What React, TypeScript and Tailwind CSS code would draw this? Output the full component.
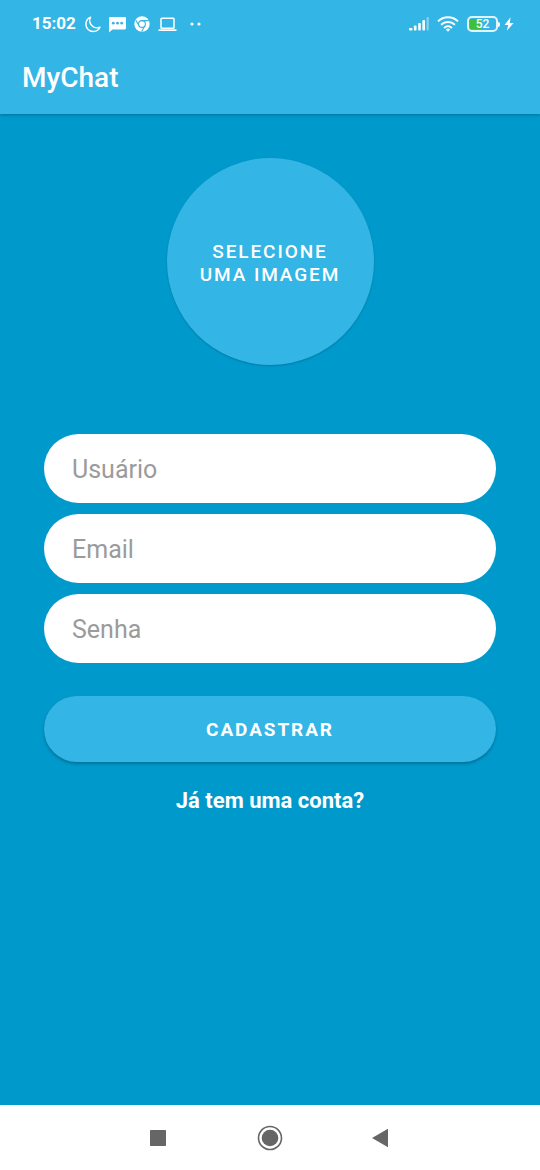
import type { InputHTMLAttributes } from "react";

function MoonIcon() {
  return (
    <svg viewBox="0 0 17 17" className="h-[17px] w-[17px]" fill="none" stroke="currentColor" strokeWidth="1.4" strokeLinejoin="round">
      <path d="M6.6 1.2A7.4 7.4 0 1 0 16 11.2 7.3 7.3 0 0 1 6.6 1.2Z" />
    </svg>
  );
}

function ChatIcon() {
  return (
    <svg viewBox="0 0 17 17" className="h-[17px] w-[17px]">
      <path fill="currentColor" d="M1.2 1h14.6c.7 0 1.2.5 1.2 1.2v10c0 .7-.5 1.2-1.2 1.200H3.400L0 16.400V2.200C0 1.500.5 1 1.200 1Z" />
      <circle cx="4.300" cy="7.200" r="1.400" fill="#33b5e5" />
      <circle cx="8.500" cy="7.200" r="1.400" fill="#33b5e5" />
      <circle cx="12.700" cy="7.200" r="1.400" fill="#33b5e5" />
    </svg>
  );
}

function ChromeIcon() {
  return (
    <svg viewBox="0 0 16 16" className="h-4 w-4">
      <circle cx="8" cy="8" r="7.700" fill="currentColor" />
      <g fill="none" stroke="#33b5e5" strokeWidth="1.100">
        <circle cx="8" cy="8" r="3.400" />
        <path d="M8 4.600h6.800M5.050 9.700 1.900 4.250M10.950 9.700 7.600 15.500" />
      </g>
    </svg>
  );
}

function LaptopIcon() {
  return (
    <svg viewBox="0 0 19 15" className="h-[15px] w-[19px]">
      <rect x="3" y="1.200" width="13" height="10" rx=".8" fill="none" stroke="currentColor" strokeWidth="1.500" />
      <path d="M.5 12.300h18v1.700H.5z" fill="currentColor" />
    </svg>
  );
}

function MoreDots() {
  return (
    <svg viewBox="0 0 12 4" className="h-1 w-3" fill="currentColor">
      <circle cx="3" cy="2" r="1.600" />
      <circle cx="10" cy="2" r="1.600" />
    </svg>
  );
}

function SignalIcon() {
  return (
    <svg viewBox="0 0 20 16" className="h-4 w-5" fill="currentColor">
      <rect x="0" y="12" width="3.500" height="2.500" rx="1" />
      <rect x="4.900" y="9.500" width="2.600" height="5" rx=".8" />
      <rect x="9.200" y="7" width="2.600" height="7.500" rx=".8" />
      <rect x="13.400" y="4" width="2.600" height="10.500" rx=".8" />
      <rect x="17.600" y="1" width="2.200" height="13.500" rx=".8" opacity=".4" />
    </svg>
  );
}

function WifiIcon() {
  return (
    <svg viewBox="0 0 22 16" className="h-4 w-[22px]" fill="none" stroke="currentColor" strokeWidth="2">
      <path d="M1 5.400a14.300 14.300 0 0 1 20 0M4.100 8.700a10 10 0 0 1 13.800 0M7.100 11.900a5.700 5.700 0 0 1 7.800 0" />
      <path d="M8.800 13.600a3.200 3.200 0 0 1 4.400 0L11 15.800Z" fill="currentColor" stroke="none" />
    </svg>
  );
}

function Battery() {
  return (
    <div className="flex items-center">
      <div className="flex h-4 w-[31px] rounded-[5px] border-2 border-white/85 p-px">
        <div className="flex flex-1 items-center justify-center bg-linear-to-r from-[#3fbf3f] from-45% to-transparent to-45% text-[12px] leading-none font-medium">
          52
        </div>
      </div>
      <div className="h-[5px] w-[2px] rounded-r-sm bg-white" />
    </div>
  );
}

function BoltIcon() {
  return (
    <svg viewBox="0 0 10 14" className="h-[14px] w-[10px]" fill="currentColor">
      <path d="M6.600.2.500 7.900h3.700L2.800 13.800l6.800-7.900H5.800Z" />
    </svg>
  );
}

function StatusBar() {
  return (
    <div className="flex h-12 items-center justify-between pr-[26px] pl-8">
      <div className="flex items-center gap-2">
        <span className="text-[17px] font-bold">15:02</span>
        <MoonIcon />
        <ChatIcon />
        <ChromeIcon />
        <LaptopIcon />
        <span className="flex pl-1">
          <MoreDots />
        </span>
      </div>
      <div className="flex items-center gap-2">
        <SignalIcon />
        <WifiIcon />
        <div className="flex items-center gap-1">
          <Battery />
          <BoltIcon />
        </div>
      </div>
    </div>
  );
}

function Field(props: InputHTMLAttributes<HTMLInputElement>) {
  return (
    <input
      {...props}
      aria-label={props.placeholder}
      className="h-[69px] w-full rounded-full bg-white px-7 pt-[2px] text-[25px] text-[#333333] outline-none placeholder:text-[#9b9b9b]"
    />
  );
}

function NavigationBar() {
  return (
    <nav className="flex h-[65px] items-center justify-center gap-16 bg-white text-[#666666]">
      <button type="button" aria-label="Recentes" className="flex h-12 w-12 items-center justify-center">
        <svg viewBox="0 0 16 16" className="h-4 w-4" fill="currentColor">
          <rect width="16" height="16" rx=".7" />
        </svg>
      </button>
      <button type="button" aria-label="Início" className="flex h-12 w-12 items-center justify-center">
        <svg viewBox="0 0 26 26" className="h-[26px] w-[26px]">
          <circle cx="13" cy="13" r="11.500" fill="none" stroke="currentColor" strokeWidth="1.600" />
          <circle cx="13" cy="13" r="8.300" fill="currentColor" />
        </svg>
      </button>
      <button type="button" aria-label="Voltar" className="flex h-12 w-12 items-center justify-center">
        <svg viewBox="0 0 20 20" className="h-5 w-5" fill="currentColor">
          <path d="M0 10 16 .8v18.400Z" />
        </svg>
      </button>
    </nav>
  );
}

export default function App() {
  return (
    <div className="flex min-h-screen flex-col bg-[#0099cc] font-[Roboto,sans-serif] text-white">
      <header className="bg-[#33b5e5] shadow-[0_1px_3px_rgba(0,0,0,0.25)]">
        <StatusBar />
        <h1 className="px-[22px] pt-[14px] pb-5 text-[28px] leading-8 font-medium">MyChat</h1>
      </header>

      <main className="flex flex-1 flex-col items-center px-11 pt-11">
        <button
          type="button"
          className="h-[207px] w-[207px] rounded-full bg-[#33b5e5] px-6 pt-[2px] text-[19px] leading-[23px] font-medium tracking-widest shadow-[0_1px_2px_rgba(0,0,0,0.2)]"
        >
          SELECIONE
          <br />
          UMA IMAGEM
        </button>

        <form className="mt-[69px] flex w-full flex-col gap-[11px]" onSubmit={(event) => event.preventDefault()}>
          <Field type="text" placeholder="Usuário" autoComplete="username" />
          <Field type="email" placeholder="Email" autoComplete="email" />
          <Field type="password" placeholder="Senha" autoComplete="new-password" />
          <button
            type="submit"
            className="mt-[22px] h-[66px] rounded-full bg-[#33b5e5] pt-[2px] text-[19px] font-bold tracking-widest shadow-[0_2px_3px_rgba(0,0,0,0.25)]"
          >
            CADASTRAR
          </button>
        </form>

        <a href="#entrar" className="mt-[25px] text-[22px] leading-7 font-bold">
          Já tem uma conta?
        </a>
      </main>

      <NavigationBar />
    </div>
  );
}
